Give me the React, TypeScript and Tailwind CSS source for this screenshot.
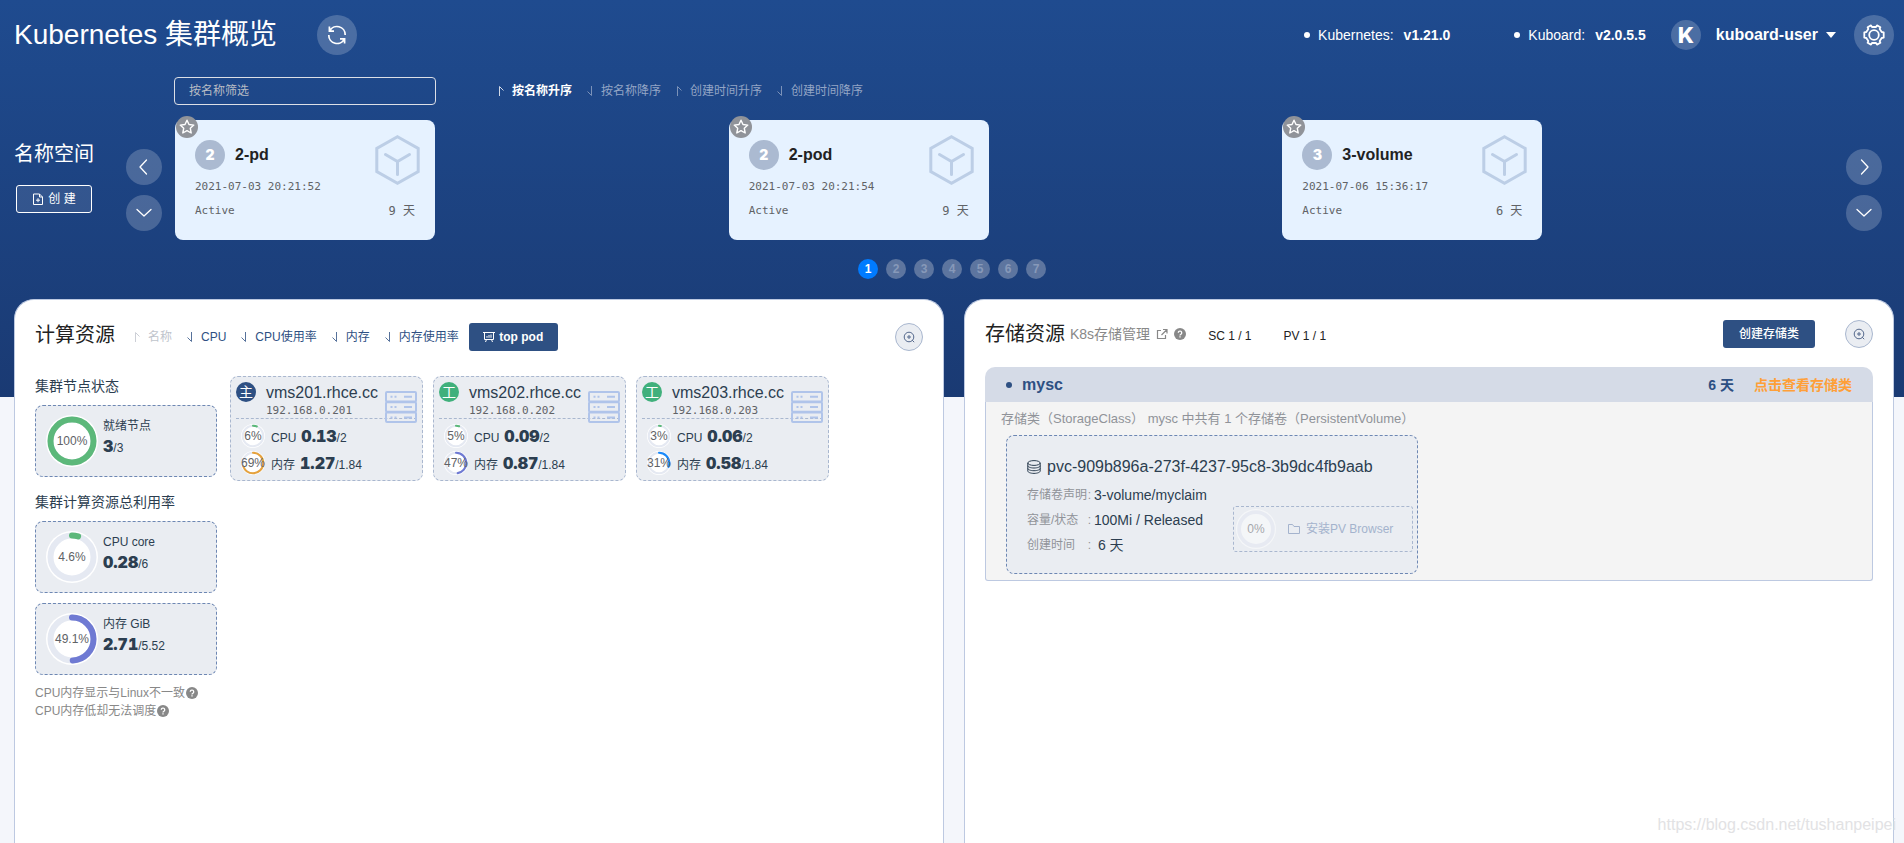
import { ReactNode } from "react"

type SortItem = { label: string; dir: "up" | "down"; className: string }

const namespaces = [
    { count: 2, name: "2-pd", created: "2021-07-03 20:21:52", age: "9 天" },
    { count: 2, name: "2-pod", created: "2021-07-03 20:21:54", age: "9 天" },
    { count: 3, name: "3-volume", created: "2021-07-06 15:36:17", age: "6 天" },
]

const namespaceSorts: SortItem[] = [
    { label: "按名称升序", dir: "up", className: "font-bold text-white" },
    { label: "按名称降序", dir: "down", className: "text-[#93a5c5]" },
    { label: "创建时间升序", dir: "up", className: "text-[#93a5c5]" },
    { label: "创建时间降序", dir: "down", className: "text-[#93a5c5]" },
]

const nodeSorts: SortItem[] = [
    { label: "名称", dir: "up", className: "text-[#c0c4cc]" },
    { label: "CPU", dir: "down", className: "text-[#2e5083]" },
    { label: "CPU使用率", dir: "down", className: "text-[#2e5083]" },
    { label: "内存", dir: "down", className: "text-[#2e5083]" },
    { label: "内存使用率", dir: "down", className: "text-[#2e5083]" },
]

const nodes = [
    { name: "vms201.rhce.cc", ip: "192.168.0.201", role: "主", roleClass: "bg-[#2e5083]", cpu: 6, cpuUsed: "0.13", mem: 69, memUsed: "1.27", memColor: "#e6a23c" },
    { name: "vms202.rhce.cc", ip: "192.168.0.202", role: "工", roleClass: "bg-[#40b07c]", cpu: 5, cpuUsed: "0.09", mem: 47, memUsed: "0.87", memColor: "#6f7ad3" },
    { name: "vms203.rhce.cc", ip: "192.168.0.203", role: "工", roleClass: "bg-[#40b07c]", cpu: 3, cpuUsed: "0.06", mem: 31, memUsed: "0.58", memColor: "#1989fa" },
]

function Arrow({ dir }: { dir: "up" | "down" }) {
    return (
        <svg className="size-3 opacity-80" viewBox="0 0 12 12" fill="none" stroke="currentColor">
            <path d={dir === "up" ? "M4.5 11V1.5L8.5 5.5" : "M7.5 1v9.5L3.5 6.5"} />
        </svg>
    )
}

function SortList({ items }: { items: SortItem[] }) {
    return (
        <div className="flex items-center gap-3">
            {items.map((s) => (
                <button key={s.label} className={`flex items-center gap-[5px] text-xs ${s.className}`}>
                    <Arrow dir={s.dir} />
                    {s.label}
                </button>
            ))}
        </div>
    )
}

function Ring({ percent, color, stroke, className, children }: { percent: number; color: string; stroke: number; className: string; children: ReactNode }) {
    const r = 49 - stroke / 2
    const length = 2 * Math.PI * r
    return (
        <div className={`grid shrink-0 place-items-center rounded-full bg-white ${className}`}>
            <svg className="col-start-1 row-start-1 size-full -rotate-90" viewBox="0 0 104 104" fill="none" strokeWidth={stroke}>
                <circle cx="52" cy="52" r={r} stroke="#e5e9f2" />
                {percent > 0 && (
                    <circle cx="52" cy="52" r={r} stroke={color} strokeLinecap="round" strokeDasharray={`${(length * percent) / 100} ${length}`} />
                )}
            </svg>
            <span className="z-10 col-start-1 row-start-1 text-xs text-[#606266]">{children}</span>
        </div>
    )
}

function Chevron({ label, d }: { label: string; d: string }) {
    return (
        <button aria-label={label} className="grid size-9 place-items-center rounded-full bg-white/20 text-white">
            <svg className="size-4" viewBox="0 0 16 16" fill="none" stroke="currentColor" strokeWidth="1.3" strokeLinecap="round" strokeLinejoin="round">
                <path d={d} />
            </svg>
        </button>
    )
}

function Help() {
    return (
        <svg className="size-3" viewBox="0 0 12 12">
            <circle cx="6" cy="6" r="6" fill="#888" />
            <path d="M4.3 4.8a1.7 1.7 0 1 1 2.6 1.4q-.9.5-.9 1.2M6 8.3v1.2" fill="none" stroke="#fff" strokeWidth="1.3" />
        </svg>
    )
}

function ZoomButton() {
    return (
        <button aria-label="放大" className="grid size-7 place-items-center rounded-full border border-[#a9b7cf] bg-[#eaedf2] text-[#54688c]">
            <svg className="size-3" viewBox="0 0 12 12" fill="none" stroke="currentColor">
                <circle cx="6" cy="6" r="4.8" />
                <path d="M9.2 9.2l2 2M4 6h4M6 4v4" />
            </svg>
        </button>
    )
}

function ServerIcon() {
    return (
        <svg className="h-8 w-8" viewBox="0 0 32 32" fill="none" stroke="#b0c4ea" strokeWidth="2">
            <rect x="1" y="1" width="30" height="9.6" rx="1" />
            <rect x="1" y="11.2" width="30" height="9.6" rx="1" />
            <rect x="1" y="21.4" width="30" height="9.6" rx="1" />
            <path d="M5.5 5.8h2M9.5 5.8h2M19 5.8h8M5.5 16h2M9.5 16h2M19 16h8M5.5 26.4h2M9.5 26.4h2M19 26.4h8" />
        </svg>
    )
}

function Usage({ label, used, total }: { label: string; used: string; total: string }) {
    return (
        <div className="flex items-baseline text-xs text-[#2c3e50]">
            <span className="mr-[5px]">{label}</span>
            <span className="font-[Inter,sans-serif] text-base font-black tabular-nums">{used}</span>
            <span>/{total}</span>
        </div>
    )
}

function NamespaceCard({ ns }: { ns: (typeof namespaces)[number] }) {
    return (
        <div className="relative h-[120px] w-[260px] rounded-lg bg-[#e6f2ff] px-5 pt-5 font-['DejaVu_Sans_Mono','Noto_Sans_CJK_SC',monospace] text-[11px] text-[#606266]">
            <button aria-label="收藏" className="absolute -top-1 left-px grid size-[22px] place-items-center rounded-full bg-[#909399] text-white">
                <svg className="size-4" viewBox="0 0 16 16" fill="none" stroke="currentColor" strokeWidth="1.4" strokeLinejoin="round">
                    <path d="M8 1.2l2 4.3 4.8.6-3.5 3.2.9 4.7L8 11.7 3.8 14l.9-4.7L1.2 6.1 6 5.5z" />
                </svg>
            </button>
            <svg className="absolute top-[15px] right-[15px] h-[50px] w-[45px]" viewBox="0 0 45 50" fill="none" stroke="#bccee6" strokeWidth="3">
                <path d="M22.5 1.8L43.2 13.4v23.2L22.5 48.2 1.8 36.6V13.4z" />
                <path d="M10.5 19.5l12 7 12-7M22.5 26.5v13" strokeLinecap="round" />
            </svg>
            <div className="flex items-center gap-2.5 font-['Liberation_Sans','Noto_Sans_CJK_SC',sans-serif]">
                <span className="grid size-[30px] place-items-center rounded-full bg-[#abbad1] font-[Inter,sans-serif] text-sm font-black text-white">{ns.count}</span>
                <span className="text-base font-bold text-[#222]">{ns.name}</span>
            </div>
            <div className="mt-[7px] leading-5">{ns.created}</div>
            <div className="mt-1 flex justify-between leading-5">
                <span>Active</span>
                <span className="text-xs leading-5">{ns.age}</span>
            </div>
        </div>
    )
}

function SummaryBox({ percent, color, text, label, used, total }: { percent: number; color: string; text: string; label: string; used: string; total: string }) {
    return (
        <div className="flex h-[72px] w-[182px] gap-[5px] rounded-lg border border-dashed border-[#6d87b3] bg-[#eaedf2] py-[9px] pl-2.5">
            <Ring percent={percent} color={color} stroke={12} className="size-[52px]">{text}</Ring>
            <div className="flex flex-col text-xs text-[#2c3e50]">
                <span className="mt-px leading-5">{label}</span>
                <span className="leading-5">
                    <b className="font-[Inter,sans-serif] text-base leading-5 font-black tabular-nums">{used}</b>/{total}
                </span>
            </div>
        </div>
    )
}

function NodeCard({ node }: { node: (typeof nodes)[number] }) {
    return (
        <div className="relative h-[105px] w-[193px] rounded-lg border border-dashed border-[#a9b7cf] bg-[#eaedf2] px-[5px] pt-[5px]">
            <div className="flex h-[37px] gap-2.5 border-b border-dashed border-[#a9b7cf]">
                <span className={`grid size-5 place-items-center rounded-full text-sm leading-5 text-white ${node.roleClass}`}>{node.role}</span>
                <div>
                    <div className="text-base leading-[22px] text-[#2c3e50]">{node.name}</div>
                    <div className="font-['DejaVu_Sans_Mono',monospace] text-[11px] leading-[14px] text-[#606266]">{node.ip}</div>
                </div>
            </div>
            <div className="absolute top-3.5 right-[5px]">
                <ServerIcon />
            </div>
            <div className="mt-[5px] flex flex-col gap-[3px] pl-[5px]">
                <div className="flex items-center gap-1.5">
                    <Ring percent={node.cpu} color="#5cb87a" stroke={9} className="size-6">{node.cpu}%</Ring>
                    <Usage label="CPU" used={node.cpuUsed} total="2" />
                </div>
                <div className="flex items-center gap-1.5">
                    <Ring percent={node.mem} color={node.memColor} stroke={9} className="size-6">{node.mem}%</Ring>
                    <Usage label="内存" used={node.memUsed} total="1.84" />
                </div>
            </div>
        </div>
    )
}

function Header() {
    return (
        <header className="flex h-[70px] items-center pr-2.5 pl-3.5 text-white">
            <h1 className="text-[28px]">Kubernetes 集群概览</h1>
            <button aria-label="刷新" className="ml-10 grid size-10 place-items-center rounded-full bg-white/20">
                <svg className="size-5" viewBox="0 0 20 20" fill="none" stroke="currentColor" strokeWidth="1.7">
                    <path d="M2.4 1.6v4.6H7M2.6 6.2A8.2 8.2 0 0 1 18.2 10M17.6 18.4v-4.6H13M17.4 13.8A8.2 8.2 0 0 1 1.8 10" />
                </svg>
            </button>
            <div className="ml-auto flex items-center text-sm">
                <span className="mr-2 size-1.5 rounded-full bg-white" />
                <span className="mr-2.5">Kubernetes:</span>
                <b>v1.21.0</b>
                <span className="mr-2 ml-16 size-1.5 rounded-full bg-white" />
                <span className="mr-2.5">Kuboard:</span>
                <b>v2.0.5.5</b>
                <span className="ml-[25px] grid size-[30px] place-items-center rounded-full bg-white/20 font-[Inter,sans-serif] text-[22px] font-extrabold">K</span>
                <button className="ml-[15px] flex items-center gap-2 text-base font-bold">
                    kuboard-user
                    <svg className="h-1.5 w-2.5" viewBox="0 0 10 6" fill="currentColor"><path d="M0 0h10L5 6z" /></svg>
                </button>
                <button aria-label="设置" className="ml-[18px] grid size-10 place-items-center rounded-full bg-white/20">
                    <svg className="size-[22px]" viewBox="0 0 22 22" fill="none" stroke="currentColor" strokeWidth="1.8" strokeLinejoin="round">
                        <circle cx="11" cy="11" r="4.8" />
                        <path d="M8 1.4L9 3h4l1-1.6 3.4 1.8-.7 1.8 2 3 2 .3v5.4l-2 .3-2 3 .7 1.8-3.4 1.8-1-1.6H9l-1 1.6-3.4-1.8.7-1.8-2-3-2-.3V8.3l2-.3 2-3-.7-1.8z" />
                    </svg>
                </button>
            </div>
        </header>
    )
}

function Namespaces() {
    return (
        <section className="pr-[22px] pl-3.5 text-white">
            <div className="flex items-center pt-[7px] pl-40">
                <input aria-label="按名称筛选" placeholder="按名称筛选" className="mr-[59px] h-7 w-[262px] rounded border border-[#dcdfe6] bg-transparent px-3.5 text-xs placeholder:text-[#b8bcc4]" />
                <SortList items={namespaceSorts} />
            </div>
            <div className="mt-[15px] flex items-start">
                <div className="w-28 pt-5">
                    <h2 className="text-xl leading-7">名称空间</h2>
                    <button className="mt-[17px] ml-0.5 flex h-7 w-[76px] items-center justify-center gap-1 rounded-[3px] border border-white bg-white/10 text-xs">
                        <svg className="size-3" viewBox="0 0 12 12" fill="none" stroke="currentColor">
                            <path d="M1.5 1h6l3 3v7.5h-9zM7.5 1v3h3M4 7.2h4M6 5.2v4" />
                        </svg>
                        创 建
                    </button>
                </div>
                <div className="flex w-[49px] flex-col gap-2.5 pt-[29px]">
                    <Chevron label="上一页" d="M10.5 1L4 8l6.5 7" />
                    <Chevron label="展开" d="M1 4.5L8 11l7-6.5" />
                </div>
                <div className="grid flex-1 grid-cols-3">
                    {namespaces.map((ns) => (
                        <NamespaceCard key={ns.name} ns={ns} />
                    ))}
                </div>
                <div className="flex flex-col gap-2.5 pt-[29px] pl-2.5">
                    <Chevron label="下一页" d="M5.5 1L12 8l-6.5 7" />
                    <Chevron label="收起" d="M1 4.5L8 11l7-6.5" />
                </div>
            </div>
            <nav className="mt-[19px] flex justify-center gap-2 pl-2">
                {[1, 2, 3, 4, 5, 6, 7].map((n) => (
                    <button key={n} className={`size-5 rounded-full text-xs font-bold ${n === 1 ? "bg-[#007bff] text-white" : "bg-[#5d759f] text-[#8799b9]"}`}>
                        {n}
                    </button>
                ))}
            </nav>
        </section>
    )
}

function Compute() {
    return (
        <section className="flex-1 rounded-t-[20px] border border-b-0 border-[#bdc9e1] bg-white px-5">
            <div className="flex items-center pt-[23px]">
                <h2 className="mr-4 pb-1 text-xl leading-6 text-[#222]">计算资源</h2>
                <SortList items={nodeSorts} />
                <button className="ml-2.5 flex h-7 w-[89px] items-center justify-center gap-1 rounded-[3px] bg-[#2e5083] text-xs font-bold text-white">
                    <svg className="size-3" viewBox="0 0 12 12" fill="none" stroke="currentColor">
                        <path d="M0 1.5h12M1.5 1.5v7h9v-7M4 6.8V5M6 6.8V4M8 6.8V3.5M3.5 8.5L2.5 11M8.5 8.5l1 2.5" />
                    </svg>
                    top pod
                </button>
                <div className="ml-auto">
                    <ZoomButton />
                </div>
            </div>
            <div className="mt-[25px] flex gap-[13px] text-[#2c3e50]">
                <div className="flex w-[182px] flex-col">
                    <h3 className="mb-[9px] text-sm leading-5">集群节点状态</h3>
                    <SummaryBox percent={100} color="#5cb87a" text="100%" label="就绪节点" used="3" total="3" />
                    <h3 className="mt-[15px] mb-[9px] text-sm leading-5">集群计算资源总利用率</h3>
                    <div className="flex flex-col gap-2.5">
                        <SummaryBox percent={4.6} color="#5cb87a" text="4.6%" label="CPU core" used="0.28" total="6" />
                        <SummaryBox percent={49.1} color="#6f7ad3" text="49.1%" label="内存 GiB" used="2.71" total="5.52" />
                    </div>
                    <div className="mt-[9px] text-xs leading-[18px] text-[#888]">
                        <p className="flex items-center gap-px">CPU内存显示与Linux不一致<Help /></p>
                        <p className="flex items-center gap-px">CPU内存低却无法调度<Help /></p>
                    </div>
                </div>
                <div className="flex flex-wrap items-start gap-2.5">
                    {nodes.map((n) => (
                        <NodeCard key={n.name} node={n} />
                    ))}
                </div>
            </div>
        </section>
    )
}

function VolumeRow({ label, children }: { label: string; children: ReactNode }) {
    return (
        <div className="flex items-center leading-[25px]">
            <dt className="mr-[3px] flex w-16 justify-between text-xs leading-[25px] text-[#909399]">
                <span>{label}</span>
                <span>:</span>
            </dt>
            <dd className="text-sm leading-[25px] whitespace-pre">{children}</dd>
        </div>
    )
}

function Storage() {
    return (
        <section className="flex-1 rounded-t-[20px] border border-b-0 border-[#bdc9e1] bg-white px-5">
            <div className="flex items-center pt-5">
                <h2 className="mr-[5px] text-xl leading-7 text-[#222]">存储资源</h2>
                <a href="#" className="mr-1.5 flex items-center gap-1.5 text-sm text-[#888]">
                    K8s存储管理
                    <svg className="size-3" viewBox="0 0 12 12" fill="none" stroke="currentColor" strokeWidth="1.2">
                        <path d="M5 2.5H1.5v8h8V7M7 1.5h4v4M11 1.5L5.5 7" />
                    </svg>
                </a>
                <Help />
                <span className="ml-[22px] pt-1 text-xs text-[#222]">SC 1 / 1</span>
                <span className="ml-8 pt-1 text-xs text-[#222]">PV 1 / 1</span>
                <button className="ml-auto h-7 w-[92px] rounded-[3px] bg-[#2e5083] text-xs font-medium text-white">创建存储类</button>
                <div className="ml-[30px]">
                    <ZoomButton />
                </div>
            </div>
            <div className="mt-[19px]">
                <div className="flex h-[35px] items-center rounded-t-[10px] bg-[#d5dbe7] px-[21px] text-sm font-bold text-[#2e5083]">
                    <span className="mr-2.5 size-1.5 rounded-full bg-[#2e5083]" />
                    <span className="text-base">mysc</span>
                    <span className="mr-5 ml-auto">6 天</span>
                    <a href="#" className="text-[#ff9f38]">点击查看存储类</a>
                </div>
                <div className="rounded-b-[3px] border border-t-0 border-[#bdc9e1] bg-[#f4f4f4] px-[15px] pt-[7px] pb-1.5">
                    <p className="text-[13px] leading-5 text-[#909399]">存储类（StorageClass） mysc 中共有 1 个存储卷（PersistentVolume）</p>
                    <div className="relative mt-1.5 ml-[5px] h-[139px] w-[412px] rounded-lg border border-dashed border-[#6d87b3] bg-[#eaedf2] px-5 pt-[19px] text-[#2c3e50]">
                        <div className="flex items-center gap-1.5 leading-6">
                            <svg className="size-3.5" viewBox="0 0 14 14" fill="none" stroke="currentColor">
                                <ellipse cx="7" cy="3" rx="6.2" ry="2.4" />
                                <path d="M.8 3v8c0 1.3 2.8 2.4 6.2 2.4s6.2-1.1 6.2-2.4V3M.8 5.7C.8 7 3.6 8 7 8s6.2-1 6.2-2.3M.8 8.4c0 1.3 2.8 2.3 6.2 2.3s6.2-1 6.2-2.3" />
                            </svg>
                            pvc-909b896a-273f-4237-95c8-3b9dc4fb9aab
                        </div>
                        <dl className="mt-1">
                            <VolumeRow label="存储卷声明">3-volume/myclaim</VolumeRow>
                            <VolumeRow label="容量/状态">100Mi / Released</VolumeRow>
                            <VolumeRow label="创建时间">{" 6 天"}</VolumeRow>
                        </dl>
                        <button className="absolute right-1 bottom-[21px] flex h-[46px] w-[180px] items-center rounded-[3px] border border-dashed border-[#a9b7cf] pl-0.5 text-xs text-[#a4b3cd]">
                            <span className="opacity-50">
                                <Ring percent={0} color="#5cb87a" stroke={10} className="size-10">0%</Ring>
                            </span>
                            <svg className="mr-1.5 ml-3 size-3" viewBox="0 0 12 12" fill="none" stroke="currentColor">
                                <path d="M.5 1.5h4l1.5 2h5.5v7H.5z" />
                            </svg>
                            安装PV Browser
                        </button>
                    </div>
                </div>
            </div>
        </section>
    )
}

export default function App() {
    return (
        <div className="relative flex min-h-screen flex-col bg-[#f4f6fb] bg-[linear-gradient(#1f4b8f,#1a3a73)] bg-[length:100%_397px] bg-no-repeat font-['Liberation_Sans','Noto_Sans_CJK_SC',sans-serif]">
            <Header />
            <Namespaces />
            <main className="mt-5 flex flex-1 gap-5 pr-2.5 pl-3.5">
                <Compute />
                <Storage />
            </main>
            <div className="absolute right-2 bottom-1.5 text-base text-[#e2e2e4]">https://blog.csdn.net/tushanpeipei</div>
        </div>
    )
}
